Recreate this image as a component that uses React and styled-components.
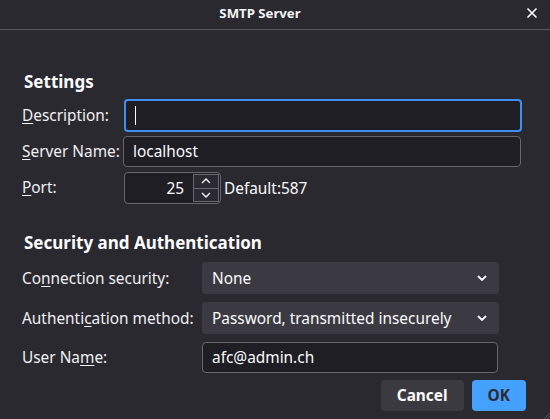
import React from "react";
import styled, { createGlobalStyle } from "styled-components";

const Global = createGlobalStyle`
  html, body { margin: 0; padding: 0; background: #2a292f; }
  body { font-family: "Noto Sans", "Open Sans", sans-serif; color: #fbfbfe; }
  #root { width: 550px; height: 419px; }
  svg { display: block; }
`;

const Window = styled.div`
  width: 550px;
  height: 419px;
  background: #2a292f;
  display: flex;
  flex-direction: column;
  overflow: hidden;
  position: relative;
`;

const TitleBar = styled.div`
  height: 30px;
  border-bottom: 1px solid #5a595f;
  box-sizing: border-box;
  display: flex;
  align-items: center;
  justify-content: center;
  padding-right: 30px;
  position: relative;
  flex-shrink: 0;
`;

const Title = styled.div`
  font-size: 13.2px;
  font-weight: 700;
  color: #f4f4f6;
  margin-top: -3px;
`;

const Close = styled.div`
  position: absolute;
  right: 12px;
  top: 7px;
  width: 12px;
  height: 12px;
`;

const Body = styled.div`
  padding: 40px 28px 0 22px;
  display: flex;
  flex-direction: column;
`;

const Heading = styled.div`
  font-size: 17px;
  font-weight: 700;
  margin-left: 2px;
  line-height: 24px;
  margin-top: ${(p) => p.$top || 0}px;
`;

const FormGrid = styled.div`
  display: grid;
  grid-template-columns: ${(p) => p.$labelW}px 1fr;
  column-gap: ${(p) => p.$gap}px;
  row-gap: ${(p) => p.$rowGap}px;
  align-items: center;
  margin-top: ${(p) => p.$top}px;
  width: ${(p) => p.$width}px;
`;

const Label = styled.label`
  font-size: 15.4px;
  color: #f0f0f4;
  white-space: nowrap;
  u { text-decoration-thickness: 1px; text-underline-offset: 2px; }
`;

const TextBox = styled.div`
  height: ${(p) => p.$h || 31}px;
  box-sizing: border-box;
  background: #1f1e25;
  border: ${(p) => (p.$focus ? "2px solid #3f8ff0" : "1px solid #68676e")};
  border-radius: 4px;
  display: flex;
  align-items: center;
  padding-left: 9px;
  font-size: 15.4px;
  color: #fbfbfe;
  margin-left: ${(p) => p.$ml || 0}px;
  margin-right: ${(p) => p.$mr || 0}px;
`;

const Caret = styled.span`
  display: inline-block;
  width: 1px;
  height: 19px;
  background: #fbfbfe;
`;

const PortRow = styled.div`
  display: flex;
  align-items: center;
  gap: 3px;
  margin-left: 1px;
  margin-top: 1px;
`;

const PortBox = styled.div`
  width: 97px;
  height: 32px;
  box-sizing: border-box;
  background: #1f1e25;
  border: 1px solid #68676e;
  border-radius: 4px;
  display: flex;
  align-items: stretch;
  overflow: hidden;
`;

const PortValue = styled.div`
  flex: 1;
  display: flex;
  align-items: center;
  justify-content: flex-end;
  padding-right: 9px;
  font-size: 15.4px;
`;

const Spin = styled.div`
  width: 27px;
  display: flex;
  flex-direction: column;
  padding: 1px 1px 1px 0;
  box-sizing: border-box;
`;

const SpinBtn = styled.div`
  flex: 1;
  border: 1px solid #68676e;
  border-top-width: ${(p) => (p.$down ? 0 : 1)}px;
  background: #2b2a33;
  display: flex;
  align-items: center;
  justify-content: center;
`;

const DefaultText = styled.span`
  font-size: 15.4px;
`;

const Select = styled.div`
  height: 32px;
  box-sizing: border-box;
  background: #3b3a42;
  border-radius: 4px;
  display: flex;
  align-items: center;
  justify-content: space-between;
  padding: 0 12px 0 10px;
  font-size: 15.4px;
`;

const Footer = styled.div`
  display: flex;
  justify-content: flex-end;
  gap: 8px;
  margin-top: 7px;
  padding-right: 24px;
`;

const Button = styled.button`
  height: 31px;
  border: none;
  border-radius: 4px;
  padding: 0 ${(p) => p.$pad}px;
  font-family: "Noto Sans", "Open Sans", sans-serif;
  font-size: 15.4px;
  font-weight: 700;
  background: ${(p) => (p.$primary ? "#45a1ff" : "#3b3a41")};
  color: ${(p) => (p.$primary ? "#2b2a33" : "#fbfbfe")};
`;

const Grip = styled.div`
  position: absolute;
  right: 0;
  bottom: 0;
  width: 8px;
  height: 8px;
`;

const Chevron = ({ up }) => (
  <svg width="10" height="6" viewBox="0 0 10 6">
    <path
      d={up ? "M1 5 L5 1 L9 5" : "M1 1 L5 5 L9 1"}
      fill="none"
      stroke="#fbfbfe"
      strokeWidth="1.4"
    />
  </svg>
);

const SelectArrow = () => (
  <svg width="10" height="6" viewBox="0 0 10 6">
    <path d="M1 1 L5 5 L9 1" fill="none" stroke="#fbfbfe" strokeWidth="1.8" />
  </svg>
);

export default function App() {
  return (
    <>
      <Global />
      <Window>
        <TitleBar>
          <Title>SMTP Server</Title>
          <Close>
            <svg width="12" height="12" viewBox="0 0 12 12">
              <path d="M1.5 1.5 L10.5 10.5 M10.5 1.5 L1.5 10.5" stroke="#ffffff" strokeWidth="1.6" />
            </svg>
          </Close>
        </TitleBar>
        <Body>
          <Heading>Settings</Heading>
          <FormGrid $labelW={97} $gap={4} $rowGap={4} $top={5} $width={500}>
            <Label><u>D</u>escription:</Label>
            <TextBox $focus $h={33} $ml={1}>
              <Caret />
            </TextBox>
            <Label><u>S</u>erver Name:</Label>
            <TextBox $mr={1}>localhost</TextBox>
            <Label><u>P</u>ort:</Label>
            <PortRow>
              <PortBox>
                <PortValue>25</PortValue>
                <Spin>
                  <SpinBtn><Chevron up /></SpinBtn>
                  <SpinBtn $down><Chevron /></SpinBtn>
                </Spin>
              </PortBox>
              <DefaultText>Default:587</DefaultText>
            </PortRow>
          </FormGrid>
          <Heading $top={27}>Security and Authentication</Heading>
          <FormGrid $labelW={172} $gap={8} $rowGap={8} $top={7} $width={477}>
            <Label>Co<u>n</u>nection security:</Label>
            <Select>
              <span>None</span>
              <SelectArrow />
            </Select>
            <Label>Authenti<u>c</u>ation method:</Label>
            <Select>
              <span>Password, transmitted insecurely</span>
              <SelectArrow />
            </Select>
            <Label>User Na<u>m</u>e:</Label>
            <TextBox $mr={1}>afc@admin.ch</TextBox>
          </FormGrid>
        </Body>
        <Footer>
          <Button $pad={16}>Cancel</Button>
          <Button $primary $pad={16}>OK</Button>
        </Footer>
        <Grip>
          <svg width="8" height="8" viewBox="0 0 8 8">
            <path d="M8 2 L2 8 M8 5 L5 8" stroke="#55545a" strokeWidth="1" />
          </svg>
        </Grip>
      </Window>
    </>
  );
}
